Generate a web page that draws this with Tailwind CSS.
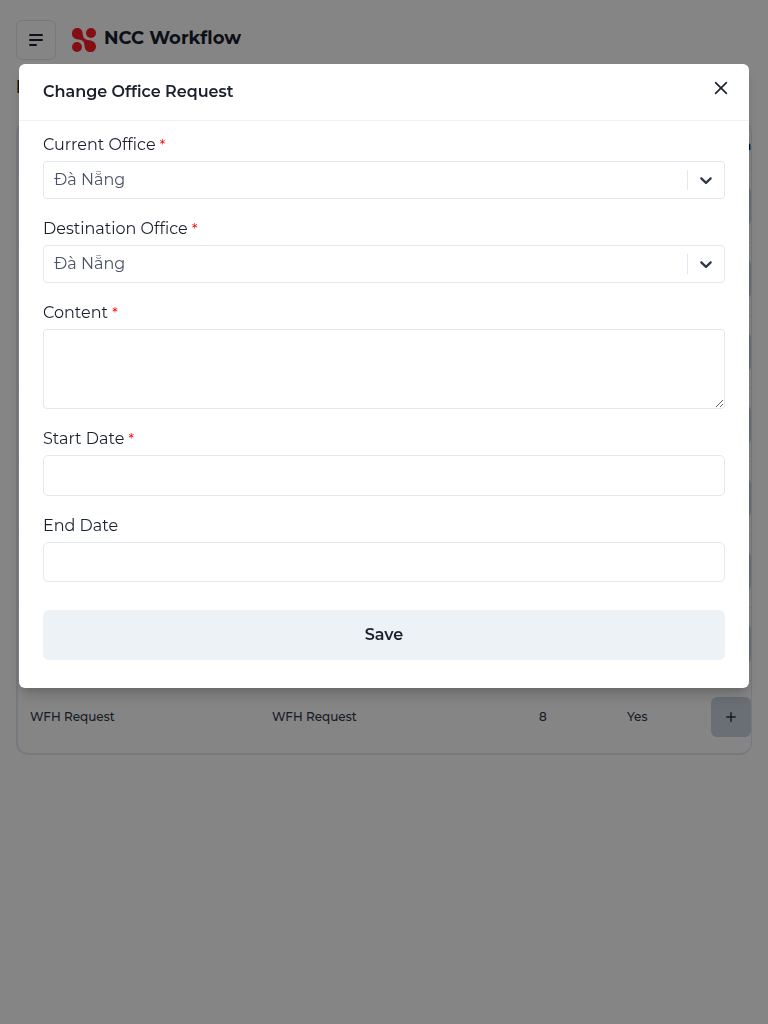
<!DOCTYPE html>
<html lang="en">
<head>
<meta charset="utf-8">
<meta name="viewport" content="width=device-width, initial-scale=1">
<title>NCC Workflow</title>
<script src="https://cdn.jsdelivr.net/npm/@tailwindcss/browser@4"></script>
</head>
<body class="h-[1024px] overflow-hidden bg-white font-[Montserrat,Inter,'Noto_Sans',sans-serif] text-[#1a202c]">
<main class="px-4 pt-5">
  <header class="flex h-10 items-center">
    <button class="flex size-10 items-center justify-center rounded-md border border-[#e2e8f0]" aria-label="Menu">
      <svg class="size-4" viewBox="0 0 16 16" fill="none" stroke="currentColor" stroke-width="2" stroke-linecap="round"><path d="M2 3h12M2 8h12M2 13h6"/></svg>
    </button>
    <svg class="ml-4 size-6" viewBox="0 0 24 24" fill="#fb1d26"><circle cx="19" cy="5" r="5"/><circle cx="5" cy="19" r="5"/><path d="M5.500 0C9 0 10.500 2.500 10.700 5.500C10.900 9 12 11 15.500 12C20 12.300 24 14 24 18.500C24 22 21.500 24 18.500 24C14.500 24 12.700 21.500 12.600 18C12.400 14 11 12.300 8 11.700C3 11.500 0 9.500 0 5.500C0 2 2.500 0 5.500 0Z"/></svg>
    <span class="relative -top-0.5 ml-2 whitespace-nowrap text-lg font-bold">NCC Workflow</span>
  </header>
  <h1 class="mt-[14px] h-7 text-lg leading-[26px] font-bold">R</h1>
  <section class="mt-[19px] h-[634px] overflow-hidden rounded-xl border-2 border-r border-[#e2e8f0]">
    <div class="flex h-[47px] items-center justify-end border-b border-[#e2e8f0] bg-[#f7fafc] text-xs font-bold text-black">Action</div>
    <div class="flex h-[73px] items-center justify-end border-b border-[#e2e8f0]"><div class="h-10 w-10 rounded-md bg-[#cbd5e0]"></div></div>
    <div class="flex h-[73px] items-center justify-end border-b border-[#e2e8f0]"><div class="h-10 w-10 rounded-md bg-[#cbd5e0]"></div></div>
    <div class="flex h-[73px] items-center justify-end border-b border-[#e2e8f0]"><div class="h-10 w-10 rounded-md bg-[#cbd5e0]"></div></div>
    <div class="flex h-[73px] items-center justify-end border-b border-[#e2e8f0]"><div class="h-10 w-10 rounded-md bg-[#cbd5e0]"></div></div>
    <div class="flex h-[73px] items-center justify-end border-b border-[#e2e8f0]"><div class="h-10 w-10 rounded-md bg-[#cbd5e0]"></div></div>
    <div class="flex h-[73px] items-center justify-end border-b border-[#e2e8f0]"><div class="h-10 w-10 rounded-md bg-[#cbd5e0]"></div></div>
    <div class="flex h-[73px] items-center justify-end border-b border-[#e2e8f0]"><div class="h-10 w-10 rounded-md bg-[#cbd5e0]"></div></div>
    <div class="grid h-[72px] grid-cols-[242px_267px_88px_96px_40px] items-center text-xs font-medium text-[#2d3748]">
      <span class="pl-3">WFH Request</span>
      <span class="pl-3">WFH Request</span>
      <span class="pl-3">8</span>
      <span class="pl-3">Yes</span>
      <button class="flex size-10 items-center justify-center rounded-md bg-[#cbd5e0]" aria-label="Add"><svg class="size-[10px]" viewBox="0 0 10 10" stroke="#2d3748" stroke-width="1.500" stroke-linecap="round"><path d="M5 .8v8.400M.8 5h8.400"/></svg></button>
    </div>
  </section>
</main>

<div class="fixed inset-0 flex items-start justify-center bg-black/48 pt-16">
  <section class="h-[624px] w-[730px] rounded-md bg-white shadow-[0_10px_15px_-3px_rgba(0,0,0,0.18),0_4px_6px_-2px_rgba(0,0,0,0.1)]" role="dialog">
    <header class="flex h-[57px] items-center justify-between border-b border-[#edf2f7] pr-5 pb-px pl-6">
      <h2 class="whitespace-nowrap text-base leading-6 font-semibold">Change Office Request</h2>
      <svg class="mb-[7px] size-4" viewBox="0 0 16 16" stroke="#1a202c" stroke-width="1.600" stroke-linecap="round"><path d="m2.600 2.600 10.800 10.800m0-10.800L2.600 13.400"/></svg>
    </header>
    <form class="px-6 pt-3">
      <label class="block h-7 whitespace-nowrap text-base leading-6">Current Office <span class="text-sm text-[#ff0000]">*</span></label>
      <div class="flex h-[38px] items-center rounded border border-[#e2e8f0] pl-2.5 text-[#4a5568]"><span class="flex-1">Đà Nẵng</span><i class="h-5 w-px bg-[#e2e8f0]"></i><svg class="mx-2 size-5" viewBox="0 0 20 20" fill="#2d3748"><path d="M4.516 7.548c.436-.446 1.043-.481 1.576 0L10 11.295l3.908-3.747c.533-.481 1.141-.446 1.574 0 .436.445.408 1.197 0 1.615l-4.695 4.502a1.095 1.095 0 0 1-1.574 0L4.516 9.163c-.409-.418-.436-1.170 0-1.615z"/></svg></div>
      <label class="mt-[18px] block h-7 whitespace-nowrap text-base leading-6">Destination Office <span class="text-sm text-[#ff0000]">*</span></label>
      <div class="flex h-[38px] items-center rounded border border-[#e2e8f0] pl-2.5 text-[#4a5568]"><span class="flex-1">Đà Nẵng</span><i class="h-5 w-px bg-[#e2e8f0]"></i><svg class="mx-2 size-5" viewBox="0 0 20 20" fill="#2d3748"><path d="M4.516 7.548c.436-.446 1.043-.481 1.576 0L10 11.295l3.908-3.747c.533-.481 1.141-.446 1.574 0 .436.445.408 1.197 0 1.615l-4.695 4.502a1.095 1.095 0 0 1-1.574 0L4.516 9.163c-.409-.418-.436-1.170 0-1.615z"/></svg></div>
      <label class="mt-[18px] block h-7 whitespace-nowrap text-base leading-6">Content <span class="text-sm text-[#ff0000]">*</span></label>
      <textarea class="block h-20 w-full resize-y rounded-sm border border-[#e2e8f0]" aria-label="Content"></textarea>
      <label class="mt-[18px] block h-7 whitespace-nowrap text-base leading-6">Start Date <span class="text-sm text-[#ff0000]">*</span></label>
      <input class="block h-[41px] w-full rounded-[5px] border border-[#e2e8f0]" aria-label="Start Date">
      <label class="mt-[18px] block h-7 whitespace-nowrap text-base leading-6">End Date</label>
      <input class="block h-10 w-full rounded-[5px] border border-[#e2e8f0]" aria-label="End Date">
      <button type="button" class="mt-7 block h-[50px] w-full rounded-md bg-[#edf2f7] text-base font-semibold">Save</button>
    </form>
  </section>
</div>
</body>
</html>
